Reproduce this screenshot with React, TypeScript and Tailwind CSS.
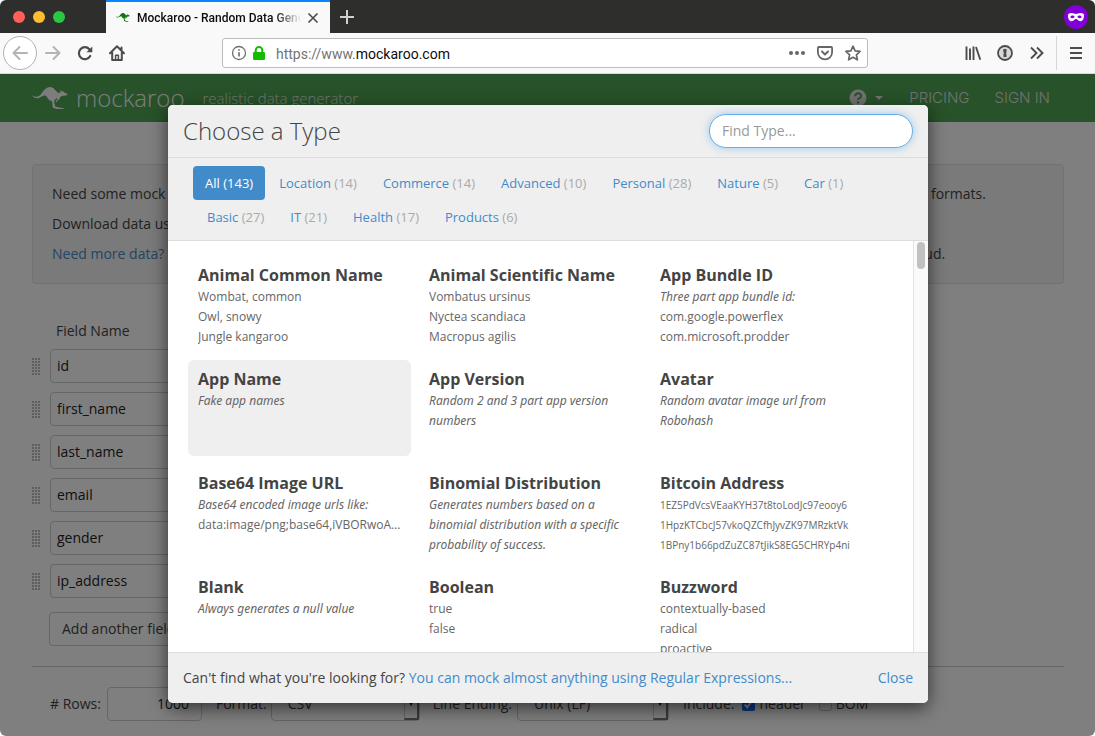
import React from "react";

const FIELDS = ["id", "first_name", "last_name", "email", "gender", "ip_address"];

const CATEGORIES: [string, number][] = [
  ["All", 143],
  ["Location", 14],
  ["Commerce", 14],
  ["Advanced", 10],
  ["Personal", 28],
  ["Nature", 5],
  ["Car", 1],
  ["Basic", 27],
  ["IT", 21],
  ["Health", 17],
  ["Products", 6],
];

type DataType = {
  name: string;
  note?: string;
  examples?: string[];
  small?: boolean;
  active?: boolean;
};

const TYPES: DataType[] = [
  { name: "Animal Common Name", examples: ["Wombat, common", "Owl, snowy", "Jungle kangaroo"] },
  { name: "Animal Scientific Name", examples: ["Vombatus ursinus", "Nyctea scandiaca", "Macropus agilis"] },
  { name: "App Bundle ID", note: "Three part app bundle id:", examples: ["com.google.powerflex", "com.microsoft.prodder"] },
  { name: "App Name", note: "Fake app names", active: true },
  { name: "App Version", note: "Random 2 and 3 part app version numbers" },
  { name: "Avatar", note: "Random avatar image url from Robohash" },
  { name: "Base64 Image URL", note: "Base64 encoded image urls like:", examples: ["data:image/png;base64,iVBORwoAAAANSUhEUgAA"] },
  { name: "Binomial Distribution", note: "Generates numbers based on a binomial distribution with a specific probability of success." },
  {
    name: "Bitcoin Address",
    examples: [
      "1EZ5PdVcsVEaaKYH37t8toLodJc97eooy6",
      "1HpzKTCbcJ57vkoQZCfhJyvZK97MRzktVk",
      "1BPny1b66pdZuZC87tJikS8EG5CHRYp4ni",
    ],
    small: true,
  },
  { name: "Blank", note: "Always generates a null value" },
  { name: "Boolean", examples: ["true", "false"] },
  { name: "Buzzword", examples: ["contextually-based", "radical", "proactive"] },
];

function Kangaroo({ className }: { className: string }) {
  return (
    <svg viewBox="0 0 107 67" className={className} fill="currentColor" aria-hidden="true">
      <path d="M0 24C5 30 17 32 26 22C33 13 40 1 54 0C65 0 70 12 77 17L85 17L83 8L89 14L92 12L96 16L106 21C105 25 101 26 97 26L90 26L84 30L81 37L77 39L73 45L70 44L75 36L74 33L67 39L66 45L69 58L80 61L95 63L94 67L76 66L62 62L61 57L60 43L50 38L45 31L42 26C34 23 27 31 19 33C10 35 2 31 0 24Z" />
    </svg>
  );
}

function TabStrip() {
  return (
    <div className="flex h-[33px] items-stretch bg-[#2e2e2c] pr-[7px] pl-[13px]">
      <div className="flex w-[93px] items-center gap-2">
        <span className="size-3 rounded-full bg-[#ff5f57]" />
        <span className="size-3 rounded-full bg-[#febc2e]" />
        <span className="size-3 rounded-full bg-[#28c840]" />
      </div>
      <div className="flex w-56 items-center border-t-2 border-[#0a84ff] bg-[#f9f9fa] pr-[11px] pl-[10px]">
        <Kangaroo className="w-[14px] shrink-0 text-[#0d7a10]" />
        <span className="ml-[7px] flex-1 overflow-hidden font-[Roboto,sans-serif] text-[12px] leading-4 font-medium whitespace-nowrap text-[#0c0c0d] [mask-image:linear-gradient(to_right,black_84%,transparent)]">
          Mockaroo - Random Data Generator
        </span>
        <button aria-label="Close tab" className="ml-[6px] text-[#4a4a4b]">
          <svg width="12" height="12" viewBox="0 0 12 12" fill="none" stroke="currentColor" strokeWidth="1.6">
            <path d="M1.5 1.5l9 9M10.5 1.5l-9 9" />
          </svg>
        </button>
      </div>
      <button aria-label="New tab" className="ml-[10px] text-[#d0d0d0]">
        <svg width="14" height="14" viewBox="0 0 14 14" fill="none" stroke="currentColor" strokeWidth="2">
          <path d="M7 0v14M0 7h14" />
        </svg>
      </button>
      <div className="ml-auto flex items-center">
        <svg width="24" height="24" viewBox="0 0 24 24" aria-label="Private browsing">
          <circle cx="12" cy="12" r="12" fill="#8000d7" />
          <path
            fill="#fff"
            fillRule="evenodd"
            d="M4 10.2C4 8.700 5.600 8 7.500 8C9.600 8 10.500 8.900 12 8.900S14.400 8 16.500 8C18.400 8 20 8.700 20 10.200C20 13.600 18.800 16.200 16.300 16.200C14 16.200 13.400 14.100 12 14.100S10 16.200 7.700 16.200C5.200 16.200 4 13.600 4 10.200ZM8.500 10.600C7.300 10.600 6.500 11.300 6.200 12.200C6.900 12.900 7.700 13.200 8.500 13.200S10.200 12.800 10.800 12.100C10.300 11.200 9.600 10.600 8.500 10.600ZM15.500 10.600C14.400 10.600 13.700 11.200 13.200 12.100C13.800 12.800 14.700 13.200 15.500 13.200S17.100 12.900 17.800 12.200C17.500 11.300 16.700 10.600 15.500 10.600Z"
          />
        </svg>
      </div>
    </div>
  );
}

function Toolbar() {
  return (
    <div className="flex h-[41px] items-center border-b border-[#d9d9d9] bg-[#f9f9fa] pr-[11px] pl-[3px] text-[#4c4c4e]">
      <button
        aria-label="Back"
        className="flex size-[34px] shrink-0 items-center justify-center rounded-full border border-[#b1b1b1] bg-white text-[#b4b4b5]"
      >
        <svg width="16" height="16" viewBox="0 0 16 16" fill="none" stroke="currentColor" strokeWidth="2" strokeLinecap="round" strokeLinejoin="round">
          <path d="M15 8H1.500M7.500 2L1.500 8l6 6" />
        </svg>
      </button>
      <button aria-label="Forward" className="ml-2 text-[#b4b4b5]">
        <svg width="16" height="16" viewBox="0 0 16 16" fill="none" stroke="currentColor" strokeWidth="2" strokeLinecap="round" strokeLinejoin="round">
          <path d="M1 8h13.500M8.500 2l6 6-6 6" />
        </svg>
      </button>
      <button aria-label="Reload" className="ml-4">
        <svg width="16" height="16" viewBox="0 0 16 16" fill="none" stroke="currentColor" strokeWidth="2.200" strokeLinecap="round">
          <path d="M13.200 11A6 6 0 1 1 12.400 4.200" />
          <path d="M15.300 1.500v5.800H9.500z" fill="currentColor" stroke="none" />
        </svg>
      </button>
      <button aria-label="Home" className="ml-4">
        <svg width="16" height="16" viewBox="0 0 16 16" fill="none" stroke="currentColor" strokeWidth="2" strokeLinecap="round" strokeLinejoin="round">
          <path d="M1 8.200L8 1.200l7 7M3.200 7.500V15h9.600V7.500M12.500 2.500v3" />
          <path d="M6.600 15v-4.800h2.800V15" strokeWidth="1.500" />
        </svg>
      </button>
      <div className="mr-[97px] ml-[97px] flex h-[30px] min-w-0 flex-1 items-center rounded-[3px] border border-[#bcbcbd] bg-white pr-[6px] pl-2">
        <svg width="16" height="16" viewBox="0 0 16 16" fill="none" stroke="#707072" className="shrink-0">
          <circle cx="8" cy="8" r="6.500" strokeWidth="1.300" />
          <path d="M8 7.200v4.300M8 4.300v1.500" strokeWidth="1.700" />
        </svg>
        <svg width="14" height="16" viewBox="0 0 14 16" className="ml-[5px] shrink-0">
          <rect x="1" y="7" width="12" height="8" rx="1.300" fill="#12bc00" />
          <path d="M3.700 8V5.200a3.300 3.300 0 0 1 6.600 0V8" fill="none" stroke="#12bc00" strokeWidth="2" />
        </svg>
        <span className="ml-[10px] flex-1 pt-px font-[Roboto,sans-serif] text-[14px] leading-5 text-[#737373]">
          https://www.<span className="text-[#0c0c0d]">mockaroo.com</span>
        </span>
        <button aria-label="Page actions" className="text-[#666668]">
          <svg width="16" height="16" viewBox="0 0 16 16" fill="currentColor">
            <circle cx="2" cy="8" r="2" />
            <circle cx="8" cy="8" r="2" />
            <circle cx="14" cy="8" r="2" />
          </svg>
        </button>
        <button aria-label="Save to Pocket" className="ml-3 text-[#666668]">
          <svg width="16" height="16" viewBox="0 0 16 16" fill="none" stroke="currentColor" strokeWidth="1.800" strokeLinecap="round" strokeLinejoin="round">
            <path d="M1.900 2h12.200q1 0 1 1v4.300a7.100 7.100 0 0 1-14.200 0V3q0-1 1-1z" />
            <path d="M5 6.500l3 3 3-3" strokeWidth="2" />
          </svg>
        </button>
        <button aria-label="Bookmark" className="ml-3 text-[#666668]">
          <svg width="16" height="16" viewBox="0 0 16 16" fill="none" stroke="currentColor" strokeWidth="1.700" strokeLinejoin="round">
            <path d="M8 1.200l2.100 4.600 5 .6-3.700 3.400 1 5L8 12.300l-4.400 2.500 1-5L.9 6.400l5-.6z" />
          </svg>
        </button>
      </div>
      <button aria-label="Library">
        <svg width="16" height="16" viewBox="0 0 16 16" fill="none" stroke="currentColor" strokeWidth="1.900">
          <path d="M1.500 1.500V15M5 3.500V15M8.500 1.500V15M11 2l4.300 12.800" />
        </svg>
      </button>
      <button aria-label="Password manager" className="ml-4">
        <svg width="16" height="16" viewBox="0 0 16 16">
          <circle cx="8" cy="8" r="7" fill="#d8d8d8" stroke="currentColor" strokeWidth="1.800" />
          <path d="M6.300 4h3.200v3.600l-.8.700.8.700V12H6.500V8.600l.7-.7-.9-.8z" fill="currentColor" />
        </svg>
      </button>
      <button aria-label="More tools" className="ml-4">
        <svg width="16" height="16" viewBox="0 0 16 16" fill="none" stroke="currentColor" strokeWidth="1.900">
          <path d="M2 2.500L7.500 8 2 13.500M8 2.500L13.500 8 8 13.500" />
        </svg>
      </button>
      <span className="ml-[11px] h-[34px] w-px bg-[#d7d7db]" />
      <button aria-label="Open menu" className="ml-[11px]">
        <svg width="16" height="16" viewBox="0 0 16 16" fill="none" stroke="currentColor" strokeWidth="2">
          <path d="M2 3h12M2 8h12M2 13h12" />
        </svg>
      </button>
    </div>
  );
}

function SiteNav() {
  return (
    <nav className="flex h-12 items-center bg-[#50a452] pr-[45px] pl-8 text-[#fafafa]">
      <a href="#home" className="flex items-center">
        <Kangaroo className="w-9" />
        <span className="ml-2 text-[24px] leading-8 font-light">mockaroo</span>
      </a>
      <span className="ml-[18px] text-[15px] leading-6 font-light text-[#e0ede0]">realistic data generator</span>
      <div className="ml-auto flex items-center font-[Inter,sans-serif] text-[15px] leading-5 font-light text-[#e2e2e2]">
        <button aria-label="Help" className="flex items-center gap-2">
          <svg width="18" height="18" viewBox="0 0 18 18">
            <circle cx="9" cy="9" r="8.500" fill="currentColor" />
            <path d="M6.200 7.200Q6.200 4.300 9.200 4.300T12 7Q12 8.300 10.500 9.100T9 11" fill="none" stroke="#50a452" strokeWidth="2" />
            <path d="M7.900 12.300h2.200v2.200H7.900z" fill="#50a452" />
          </svg>
          <svg width="8" height="4" viewBox="0 0 8 4" fill="currentColor">
            <path d="M0 0h8L4 4z" />
          </svg>
        </button>
        <a href="#pricing" className="ml-[26px]">PRICING</a>
        <a href="#signin" className="ml-[25px]">SIGN IN</a>
      </div>
    </nav>
  );
}

function DragHandle() {
  return (
    <svg width="8" height="17" viewBox="0 0 8 17" fill="#bdbdbd" aria-hidden="true">
      {[0, 3, 6, 9, 12, 15].map((y) =>
        [0, 3, 6].map((x) => <rect key={`${x}-${y}`} x={x} y={y} width="2" height="2" />)
      )}
    </svg>
  );
}

function FormatSelect({ id, value, className }: { id: string; value: string; className: string }) {
  return (
    <div className={`relative ${className}`}>
      <select id={id} className="h-[34px] w-full appearance-none rounded-[4px] border border-[#ccc] bg-white px-4 text-[14px] text-[#444]">
        <option>{value}</option>
      </select>
      <span className="pointer-events-none absolute top-px right-px flex h-8 w-[15px] items-center justify-center border-r-2 border-b-2 border-l border-[#777] border-l-[#ccc]">
        <svg width="6" height="5" viewBox="0 0 6 5" fill="#222">
          <path d="M0 0h6L3 5z" />
        </svg>
      </span>
    </div>
  );
}

function SchemaPage() {
  return (
    <>
      <SiteNav />
      <main className="px-8 pt-[42px] pr-[31px] text-[14px] leading-5 text-[#444]">
        <section className="flex flex-col gap-[10px] rounded-[4px] border border-[#e3e3e3] bg-[#f5f5f5] px-[19px] pt-[19px] pb-[19px]">
          <p>
            Need some mock data to test your app? Mockaroo lets you generate up to 1,000 rows of realistic test data in
            CSV, JSON, SQL, and Excel formats.
          </p>
          <p>Download data using your browser or sign in and create your own Mock APIs.</p>
          <p>
            <a href="#plans" className="text-[#428bca]">Need more data?</a> Plans start at just $50/year. Mockaroo is
            also available as a docker image that you can deploy in your own private cloud.
          </p>
        </section>
        <h2 className="mt-[37px] pl-6">Field Name</h2>
        <ul className="mt-2 flex flex-col gap-[9px]">
          {FIELDS.map((field) => (
            <li key={field} className="flex items-center gap-[10px]">
              <DragHandle />
              <input
                aria-label="Field name"
                defaultValue={field}
                className="h-[34px] w-48 rounded-[4px] border border-[#ccc] bg-white px-[6px] pb-[2px] text-[#222]"
              />
            </li>
          ))}
        </ul>
        <button className="mt-[14px] ml-[17px] h-[34px] rounded-[4px] border border-[#ccc] px-3">Add another field</button>
        <hr className="mt-5 border-[#ccc]" />
        <div className="mt-5 flex items-center pl-[18px]">
          <label htmlFor="rows">#&nbsp;Rows:</label>
          <input
            id="rows"
            defaultValue="1000"
            className="ml-[6px] h-[34px] w-[95px] rounded-[4px] border border-[#ccc] bg-white px-3 pb-[2px] text-right text-[#222]"
          />
          <label htmlFor="format" className="ml-[14px]">Format:</label>
          <FormatSelect id="format" value="CSV" className="ml-1 w-[149px]" />
          <label htmlFor="ending" className="ml-[13px]">Line Ending:</label>
          <FormatSelect id="ending" value="Unix (LF)" className="ml-[5px] w-[152px]" />
          <span className="ml-[14px]">Include:</span>
          <label className="ml-2 flex items-center gap-1">
            <input type="checkbox" defaultChecked className="size-[13px] accent-[#1a6dff]" />
            header
          </label>
          <label className="ml-[13px] flex items-center gap-1">
            <input type="checkbox" className="size-[13px] appearance-none rounded-[3px] border border-[#c4c4c4] bg-white" />
            BOM
          </label>
        </div>
      </main>
    </>
  );
}

function TypeCard({ type }: { type: DataType }) {
  return (
    <button
      className={`flex h-24 min-w-0 flex-col rounded-[6px] px-[10px] pt-[7px] text-left text-[#666] ${
        type.active ? "bg-[#efefef]" : ""
      }`}
    >
      <span className="text-[16px] leading-6 font-bold text-[#444]">{type.name}</span>
      {type.note && <span className="font-[Noto_Sans,sans-serif] text-[12px] leading-5 italic">{type.note}</span>}
      {type.examples?.map((example) => (
        <span key={example} className={`w-full truncate leading-5 ${type.small ? "text-[10px]" : "text-[12px]"}`}>
          {example}
        </span>
      ))}
    </button>
  );
}

function TypeDialog() {
  return (
    <div
      role="dialog"
      aria-label="Choose a Type"
      className="flex w-full max-w-[760px] flex-col overflow-hidden rounded-[5px] bg-white text-[#444] shadow-[0_5px_18px_rgba(0,0,0,0.6)]"
    >
      <header className="flex h-[53px] shrink-0 items-center justify-between border-b border-[#ddd] bg-[#efefef] px-[15px]">
        <h1 className="text-[24px] leading-8 font-light">Choose a Type</h1>
        <input
          aria-label="Find type"
          placeholder="Find Type..."
          className="h-[34px] w-[204px] rounded-full border border-[#66afe9] bg-white px-3 pb-[2px] text-[14px] shadow-[0_0_8px_rgba(102,175,233,0.6)] outline-none placeholder:text-[#999]"
        />
      </header>
      <div className="flex shrink-0 flex-wrap border-b border-[#ddd] bg-[#efefef] pt-2 pr-5 pb-[6px] pl-[25px]">
        {CATEGORIES.map(([name, count], i) => (
          <button
            key={name}
            className={`rounded-[4px] px-3 py-2 text-[13px] leading-[18px] ${
              i === 0 ? "bg-[#428bca] text-white" : "ml-[2px] text-[#428bca]"
            }`}
          >
            {name} <span className={i === 0 ? "" : "text-[#aaa]"}>({count})</span>
          </button>
        ))}
      </div>
      <div className="flex min-h-0 flex-1">
        <div className="min-w-0 flex-1 overflow-y-auto [scrollbar-width:none]">
          <div className="grid grid-cols-3 gap-2 pt-[15px] pr-10 pb-4 pl-5">
            {TYPES.map((type) => (
              <TypeCard key={type.name} type={type} />
            ))}
          </div>
        </div>
        <div className="flex w-[15px] justify-center border-l border-[#e4e4e4] bg-[#fafafa] pt-px">
          <div className="h-[27px] w-2 rounded-full bg-[#c1c1c1]" />
        </div>
      </div>
      <footer className="flex h-[51px] shrink-0 items-center justify-between border-t border-[#ddd] bg-[#efefef] px-[15px] text-[14px] leading-5">
        <p>
          Can't find what you're looking for?{" "}
          <a href="#regex" className="text-[#428bca]">You can mock almost anything using Regular Expressions...</a>
        </p>
        <button className="text-[#428bca]">Close</button>
      </footer>
    </div>
  );
}

export default function App() {
  return (
    <div className="flex h-screen flex-col overflow-hidden rounded-[6px] font-[Inter,sans-serif]">
      <TabStrip />
      <Toolbar />
      <div className="relative min-h-0 flex-1 overflow-hidden bg-white font-[Open_Sans,sans-serif]">
        <SchemaPage />
        <div className="absolute inset-0 flex justify-center bg-black/50 pt-[31px] pb-[33px] pl-px">
          <TypeDialog />
        </div>
      </div>
    </div>
  );
}
